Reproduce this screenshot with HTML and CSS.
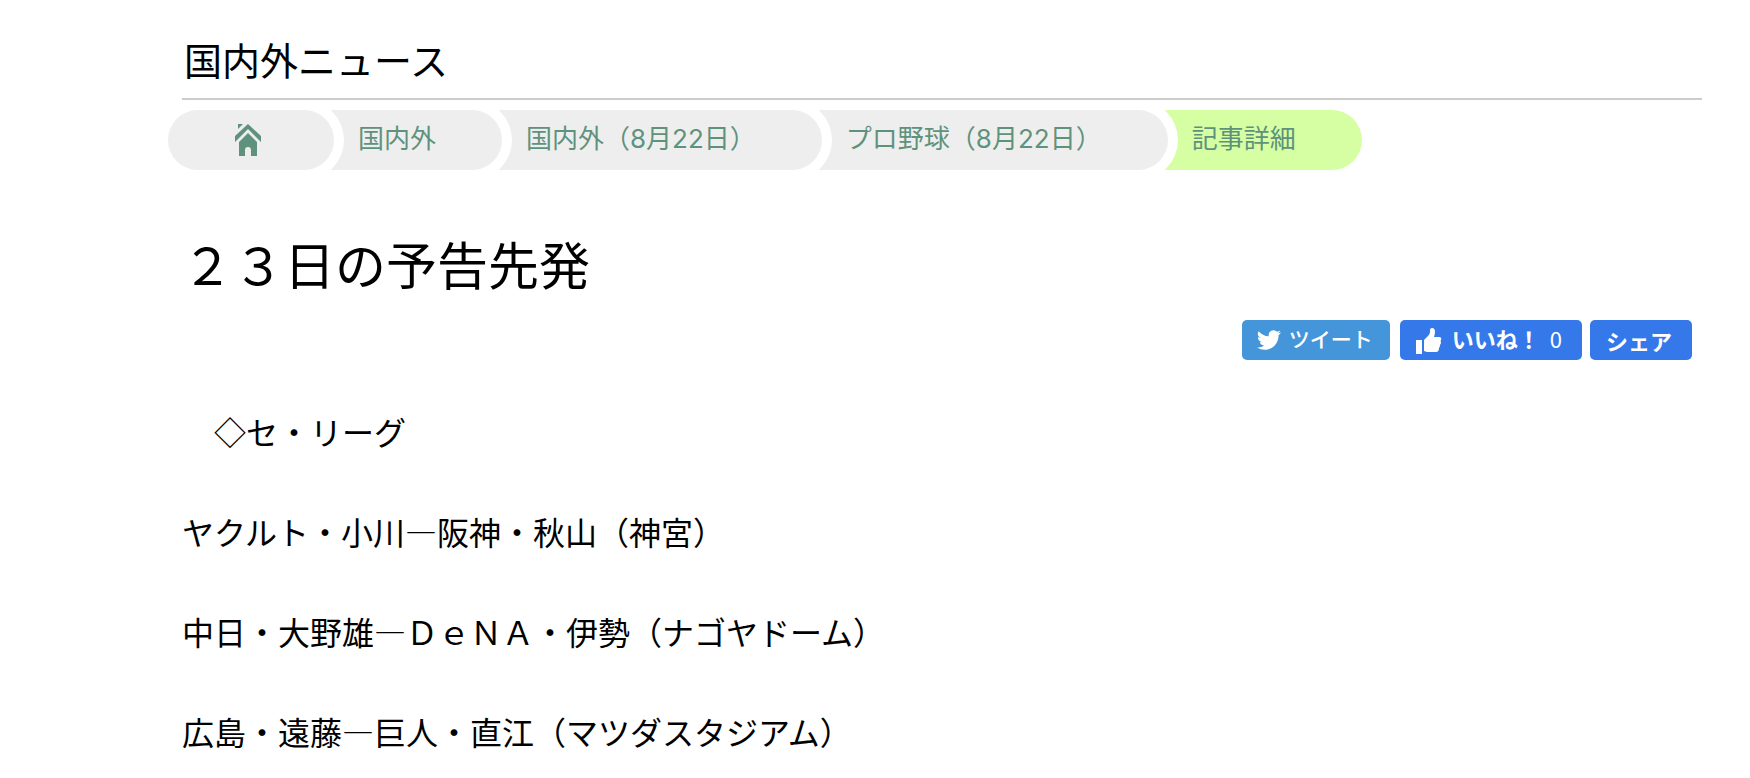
FILE: index.html
```html
<!DOCTYPE html>
<html lang="ja">
<head>
    <meta charset="UTF-8">
    <meta name="viewport" content="width=device-width, initial-scale=1.0">
    <title>２３日の予告先発</title>
    <link rel="stylesheet" href="styles.css">
</head>
<body>
    <div id="content">
        <h2 class="section-title">国内外ニュース</h2>

        <ul class="breadcrumb">
            <li class="home">
                <a href="#" aria-label="ホーム">
                    <svg width="28" height="34" viewBox="0 0 28 34" fill="#5f927c">
                        <path d="M4 1h5l-5 5z"/>
                        <path d="M14 1L27 13v6L14 6 1 19v-6z"/>
                        <path d="M14 10l9 9v14h-6v-6q0-3-3-3t-3 3v6H5V19z"/>
                    </svg>
                </a>
            </li>
            <li><a href="#">国内外</a></li>
            <li><a href="#">国内外（8月22日）</a></li>
            <li><a href="#">プロ野球（8月22日）</a></li>
            <li class="current"><a href="#">記事詳細</a></li>
        </ul>

        <h1 class="article-title">２３日の予告先発</h1>

        <div class="share">
            <button type="button" class="tweet">
                <svg width="24" height="24" viewBox="0 0 24 24" fill="#fff">
                    <path d="M23.95 4.57a10 10 0 0 1-2.82.77 4.96 4.96 0 0 0 2.16-2.72c-.95.55-2 .96-3.13 1.18a4.92 4.92 0 0 0-8.38 4.48C7.69 8.1 4.07 6.13 1.64 3.16a4.92 4.92 0 0 0 1.52 6.57 4.9 4.9 0 0 1-2.23-.61v.06c0 2.39 1.7 4.38 3.95 4.83a5 5 0 0 1-2.21.08 4.94 4.94 0 0 0 4.6 3.42A9.87 9.87 0 0 1 0 19.54a14 14 0 0 0 7.55 2.21c9.05 0 14-7.5 14-13.98 0-.21 0-.42-.02-.63a9.94 9.94 0 0 0 2.46-2.55z"/>
                </svg>
                <span>ツイート</span>
            </button>
            <button type="button" class="like">
                <svg width="26" height="26" viewBox="0 0 26 26" fill="#fff">
                    <path d="M0 12h6v14H0z"/>
                    <path d="M8 12l4-4q2-2 2-4V2q0-2 2-2 3 0 3 4 0 2-1 5h5q3 0 2 3-1 1 0 2 0 2-1 3 0 2-1 3 0 4-3 4h-9l-3-1z"/>
                </svg>
                <span>いいね！</span>
                <span class="count">0</span>
            </button>
            <button type="button" class="fb-share">シェア</button>
        </div>

        <div class="article">
            <p>　◇セ・リーグ</p>
            <p>ヤクルト・小川―阪神・秋山（神宮）</p>
            <p>中日・大野雄―ＤｅＮＡ・伊勢（ナゴヤドーム）</p>
            <p>広島・遠藤―巨人・直江（マツダスタジアム）</p>
        </div>
    </div>
</body>
</html>
```
FILE: styles.css
```css
body {
    font-family: "Noto Sans CJK JP", sans-serif;
    margin: 0;
    padding: 0;
    color: #000;
    background-color: #fff;
}

#content {
    padding: 34px 48px 20px 182px;
}

/* Section heading */
.section-title {
    margin: 0;
    padding: 0 2px 14px;
    border-bottom: 2px solid #ccc;
    font-size: 38px;
    font-weight: 400;
    line-height: 50px;
}

/* Breadcrumb */
.breadcrumb {
    display: flex;
    margin: 10px 0 0 -14px;
    padding: 0;
    list-style: none;
    font-family: Inter, "Noto Sans CJK JP", sans-serif;
    font-size: 26px;
    line-height: 58px;
    white-space: nowrap;
}

.breadcrumb li {
    height: 60px;
    margin-left: -30px;
    padding: 0 66px 0 54px;
    border-radius: 30px;
    background-color: #eee;
    box-shadow: 0 0 0 10px #fff;
}

/* each item lies over the next one */
.breadcrumb li:nth-child(1) { z-index: 5; }
.breadcrumb li:nth-child(2) { z-index: 4; }
.breadcrumb li:nth-child(3) { z-index: 3; }
.breadcrumb li:nth-child(4) { z-index: 2; }
.breadcrumb li:nth-child(5) { z-index: 1; }

.breadcrumb .home {
    display: flex;
    align-items: center;
    margin-left: 0;
    padding: 0 72px 0 66px;
}

.breadcrumb .home svg {
    display: block;
}

.breadcrumb .current {
    background-color: #d6ffa3;
}

.breadcrumb a {
    color: #5f927c;
    text-decoration: none;
}

/* Article title */
.article-title {
    margin: 58px 0 0;
    font-size: 51px;
    font-weight: 400;
    line-height: 70px;
}

/* Share buttons */
.share {
    display: flex;
    justify-content: flex-end;
    margin: 22px 10px 0 0;
}

.share button {
    display: flex;
    align-items: center;
    height: 40px;
    padding: 0 20px 0 16px;
    border: none;
    border-radius: 5px;
    background-color: #3578ea;
    color: #fff;
    font-family: inherit;
    font-size: 22px;
    font-weight: 700;
    cursor: pointer;
}

.share span {
    padding-bottom: 4px;
}

.share .tweet {
    gap: 8px;
    margin-right: 10px;
    padding: 0 17px 0 15px;
    background-color: #4595da;
    font-size: 21px;
    font-weight: 500;
}

.share .like {
    gap: 10px;
    margin-right: 8px;
}

.share .like svg {
    margin-top: 2px;
}

.share .count {
    font-weight: 400;
}

/* Article body */
.article {
    margin-top: 46px;
    font-size: 32px;
    line-height: 50px;
}

.article p {
    margin: 0 0 50px;
}

.article p:last-child {
    margin-bottom: 0;
}
```
